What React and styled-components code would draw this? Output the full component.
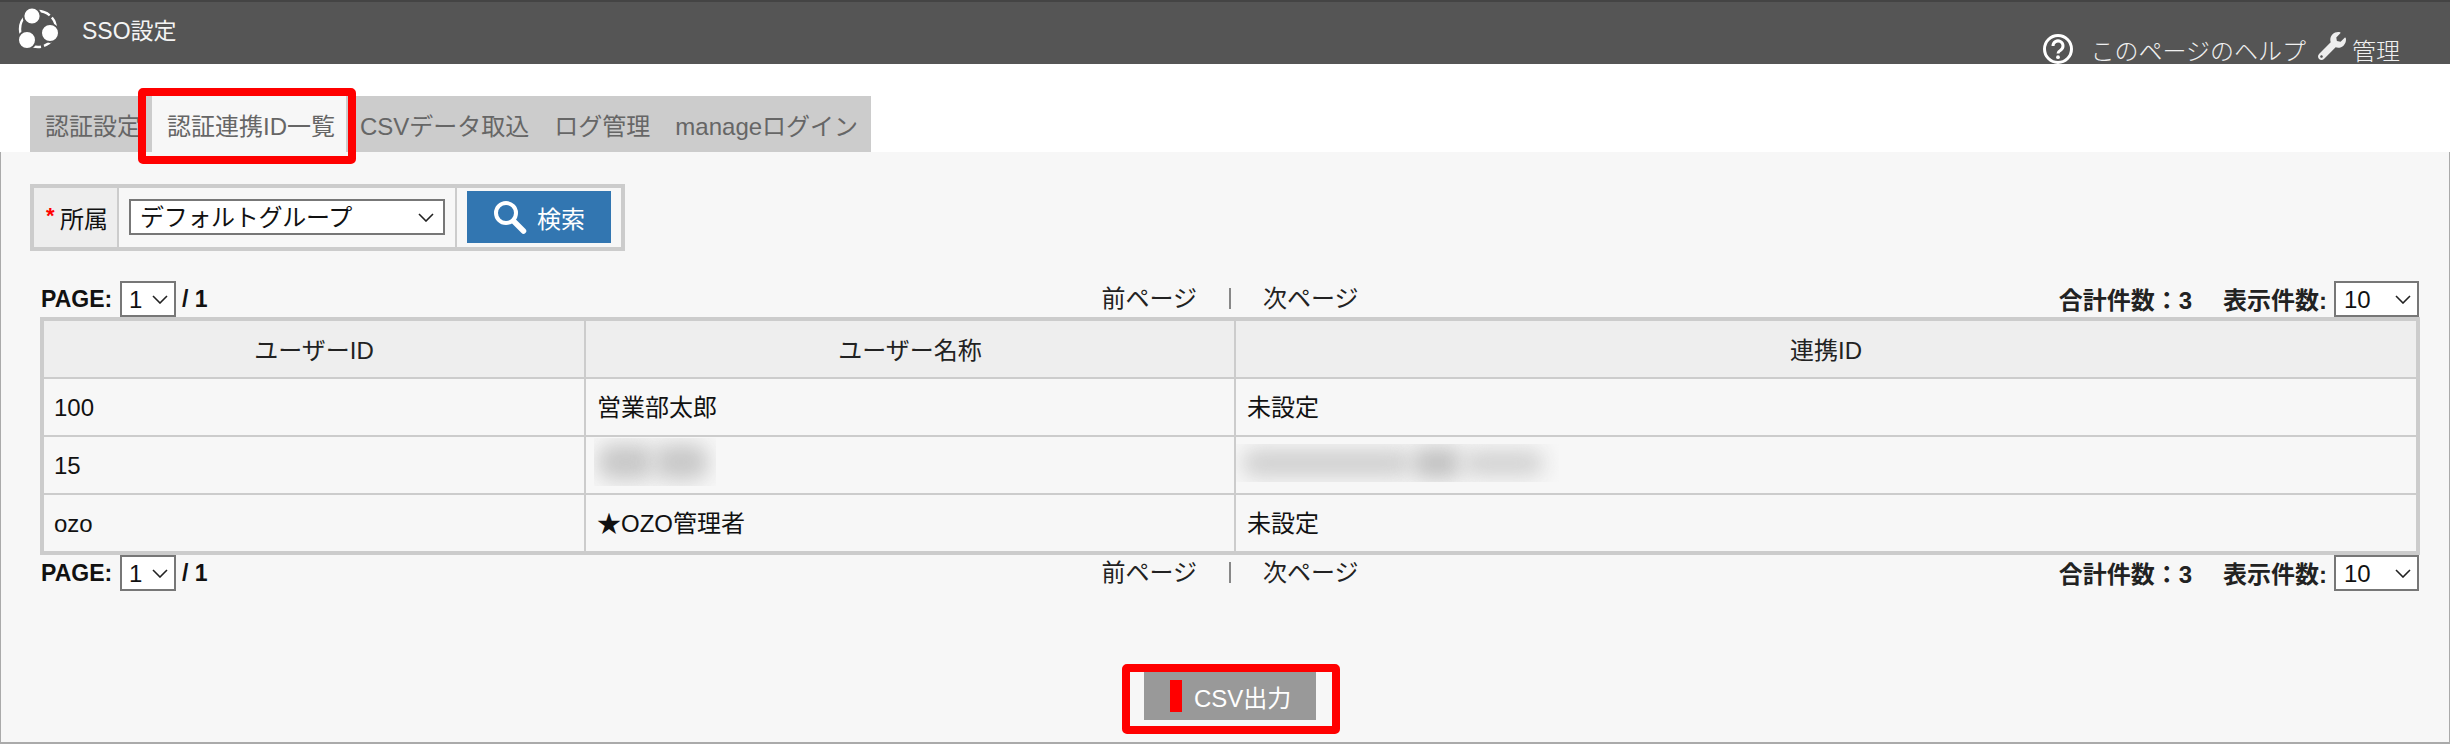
import React from "react";
import styled, { createGlobalStyle } from "styled-components";
import { FaWrench } from "react-icons/fa";

const Global = createGlobalStyle`
  html, body { margin: 0; padding: 0; background: #fff; overflow: hidden; }
  body { font-family: "Liberation Sans", "Noto Sans CJK JP", sans-serif; font-size: 24px; color: #111; }
  * { box-sizing: border-box; }
`;

const Header = styled.header`
  height: 64px;
  background: #555;
  border-top: 2px solid #444;
  display: flex;
  align-items: stretch;
  color: #fff;
  overflow: hidden;
`;
const Brand = styled.div`
  display: flex;
  align-items: center;
  padding-left: 14px;
  gap: 20px;
`;
const LogoSvg = styled.svg`
  width: 48px;
  height: 48px;
  margin-top: -6px;
`;
const Title = styled.h1`
  margin: -8px 0 0;
  font-size: 23px;
  font-weight: 400;
  color: #f4f4f4;
`;
const HeaderLinks = styled.nav`
  margin-left: auto;
  padding-right: 50px;
  display: flex;
  align-items: flex-end;
`;
const HeaderLink = styled.a`
  display: flex;
  align-items: flex-end;
  font-size: 24px;
  line-height: 30px;
  font-weight: 300;
  color: #f0f0f0;
  margin-bottom: -3px;
`;
const HelpIcon = styled.svg`
  width: 32px;
  height: 32px;
  margin: 0 16px 2px 0;
  flex: none;
`;
const WrenchIcon = styled(FaWrench)`
  width: 28px;
  height: 28px;
  margin: 0 6px 7px 12px;
  color: #eee;
  flex: none;
`;

const TabArea = styled.div`
  padding: 32px 0 0 30px;
`;
const TabBar = styled.ul`
  list-style: none;
  margin: 0;
  padding: 0 0 0 1px;
  width: 841px;
  height: 56px;
  background: #ccc;
  display: flex;
`;
const Tab = styled.li`
  position: relative;
  flex: none;
  padding: ${(p) => (p.$active ? "5px 11px 0 15px" : "5px 11px 0 14px")};
  background: ${(p) => (p.$active ? "#f7f7f7" : "transparent")};
  color: #666;
  line-height: 51px;
  white-space: nowrap;
`;
const TabHighlight = styled.span`
  position: absolute;
  top: -8px;
  left: -14px;
  right: -10px;
  bottom: -12px;
  border: 8px solid #f00;
  border-radius: 5px;
  z-index: 2;
`;

const Main = styled.main`
  height: 592px;
  background: #f7f7f7;
  border-left: 1px solid #aaa;
  border-right: 1px solid #aaa;
  border-bottom: 2px solid #aaa;
  padding: 32px 29px 0 39px;
`;
const SearchBox = styled.form`
  display: inline-flex;
  vertical-align: top;
  width: 595px;
  height: 67px;
  margin: 0 0 30px -10px;
  border: 4px solid #ccc;
`;
const SearchLabel = styled.div`
  width: 85px;
  background: #eee;
  border-right: 2px solid #ccc;
  display: flex;
  align-items: center;
  justify-content: flex-start;
  padding-left: 12px;
  white-space: nowrap;
`;
const Required = styled.span`
  color: #f00;
  font-size: 22px;
  font-weight: 700;
  width: 14px;
  margin-top: -3px;
`;
const SearchField = styled.div`
  width: 338px;
  border-right: 2px solid #ccc;
  display: flex;
  align-items: center;
  padding: 0 0 1px 10px;
`;
const SearchAction = styled.div`
  flex: 1;
  display: flex;
  align-items: center;
  padding: 0 10px 1px;
`;
const SearchButton = styled.button`
  width: 144px;
  height: 52px;
  border: 0;
  background: #3276b1;
  color: #fff;
  font: inherit;
  display: flex;
  align-items: center;
  padding: 0 0 0 24px;
  gap: 10px;
`;
const SearchIcon = styled.svg`
  width: 36px;
  height: 36px;
  flex: none;
`;

const SelectWrap = styled.span`
  position: relative;
  display: inline-block;
  flex: none;
  width: ${(p) => p.$w}px;
  height: 36px;
`;
const Select = styled.select`
  appearance: none;
  -webkit-appearance: none;
  width: 100%;
  height: 100%;
  border: 2px solid #777;
  border-radius: 0;
  background: #fff;
  color: #111;
  font-family: inherit;
  font-size: 24px;
  font-weight: 400;
  letter-spacing: ${(p) => p.$spacing || 0}px;
  padding: 0 0 0 ${(p) => p.$pad}px;
  outline: none;
`;
const Chevron = styled.svg`
  position: absolute;
  top: 14px;
  right: ${(p) => p.$r}px;
  width: 16px;
  height: 9px;
  pointer-events: none;
`;

const PagerRow = styled.div`
  height: 36px;
  display: grid;
  grid-template-columns: 1fr auto 1fr;
  align-items: center;
  padding: 0 1px;
`;
const PagerLeft = styled.div`
  display: flex;
  align-items: center;
  font-size: 23px;
  font-weight: 700;
  color: #111;
`;
const PageLabel = styled.span`
  width: 79px;
`;
const PageTotal = styled.span`
  margin-left: 6px;
`;
const PagerCenter = styled.div`
  display: flex;
  align-items: center;
  margin-top: -1px;
`;
const PagerLink = styled.a`
  color: #222;
  line-height: 30px;
`;
const PagerDivider = styled.span`
  width: 2px;
  height: 21px;
  margin: 0 32px;
  background: #888;
`;
const PagerRight = styled.div`
  display: flex;
  justify-content: flex-end;
  align-items: center;
  font-weight: 700;
  color: #222;
`;
const PagerStat = styled.span`
  margin-right: ${(p) => p.$gap}px;
  margin-top: -2px;
  white-space: nowrap;
`;

const Table = styled.table`
  width: 100%;
  table-layout: fixed;
  border-collapse: separate;
  border-spacing: 0;
  border: 4px solid #ccc;
`;
const Th = styled.th`
  height: 58px;
  background: #eee;
  font-weight: 400;
  color: #222;
  border-bottom: 2px solid #ccc;
  border-right: 2px solid #ccc;
  padding: 0 0 2px;
  &:last-child { border-right: 0; }
`;
const Td = styled.td`
  height: 58px;
  padding: ${(p) => (p.$latin ? "2px 11px 0 10px" : "0 11px 3px")};
  color: #111;
  border-bottom: 2px solid #ccc;
  border-right: 2px solid #ccc;
  white-space: nowrap;
  &:last-child { border-right: 0; }
  tr:last-child > & { height: 56px; border-bottom: 0; }
`;
const BlurCell = styled(Td)`
  padding: 0 11px;
`;
const BlurClip = styled.div`
  display: flex;
  align-items: center;
  overflow: hidden;
  width: ${(p) => p.$w}px;
  height: ${(p) => p.$h}px;
  margin: ${(p) => p.$mt}px 0 0 ${(p) => p.$ml}px;
  padding-left: ${(p) => p.$pad}px;
`;
const BlurBlob = styled.span`
  flex: none;
  width: ${(p) => p.$w}px;
  height: ${(p) => p.$h}px;
  background: ${(p) => p.$c};
  border-radius: 14px;
  filter: blur(10px);
`;

const Footer = styled.div`
  display: flex;
  justify-content: center;
  margin-top: 81px;
`;
const CsvButton = styled.button`
  position: relative;
  width: 172px;
  height: 48px;
  border: 0;
  background: #999;
  color: #fff;
  font: inherit;
  display: flex;
  align-items: center;
  padding: 0 0 0 26px;
  gap: 12px;
`;
const CsvMarker = styled.span`
  width: 12px;
  height: 32px;
  background: #f00;
`;
const CsvHighlight = styled.span`
  position: absolute;
  top: -8px;
  left: -22px;
  right: -24px;
  bottom: -14px;
  border: 8px solid #f00;
  border-radius: 5px;
`;

const ChevronDown = ({ r }) => (
  <Chevron $r={r} viewBox="0 0 16 9" aria-hidden="true">
    <path d="M1 1l7 7 7-7" fill="none" stroke="#222" strokeWidth="1.6" />
  </Chevron>
);

const Dropdown = ({ w, pad, r, value, spacing }) => (
  <SelectWrap $w={w}>
    <Select $pad={pad} $spacing={spacing} defaultValue={value}>
      <option>{value}</option>
    </Select>
    <ChevronDown r={r} />
  </SelectWrap>
);

const Pager = () => (
  <PagerRow>
    <PagerLeft>
      <PageLabel>PAGE:</PageLabel>
      <Dropdown w={56} pad={7} r={8} value="1" />
      <PageTotal>/ 1</PageTotal>
    </PagerLeft>
    <PagerCenter>
      <PagerLink>前ページ</PagerLink>
      <PagerDivider />
      <PagerLink>次ページ</PagerLink>
    </PagerCenter>
    <PagerRight>
      <PagerStat $gap={31}>合計件数：3</PagerStat>
      <PagerStat $gap={7}>表示件数:</PagerStat>
      <Dropdown w={85} pad={8} r={8} value="10" />
    </PagerRight>
  </PagerRow>
);

const tabs = ["認証設定", "認証連携ID一覧", "CSVデータ取込", "ログ管理", "manageログイン"];

export default function App() {
  return (
    <>
      <Global />
      <Header>
        <Brand>
          <LogoSvg viewBox="14 4 48 48" aria-hidden="true">
            <circle cx="38" cy="27" r="18" fill="none" stroke="#fff" strokeWidth="2.4" strokeDasharray="22 3" />
            <circle cx="32" cy="14" r="8.6" fill="#fff" stroke="#555" strokeWidth="2" />
            <circle cx="50" cy="31" r="9" fill="#fff" stroke="#555" strokeWidth="2" />
            <circle cx="27" cy="38" r="9" fill="#fff" stroke="#555" strokeWidth="2" />
          </LogoSvg>
          <Title>SSO設定</Title>
        </Brand>
        <HeaderLinks>
          <HeaderLink>
            <HelpIcon viewBox="0 0 32 32" aria-hidden="true">
              <circle cx="16" cy="16" r="13.5" fill="none" stroke="#fff" strokeWidth="3" />
              <path d="M11 13a5 5 0 1 1 7.6 4.2c-1.7 1-2.6 1.7-2.6 3.3" fill="none" stroke="#fff" strokeWidth="3" />
              <circle cx="16" cy="24.2" r="1.9" fill="#fff" />
            </HelpIcon>
            このページのヘルプ
          </HeaderLink>
          <HeaderLink>
            <WrenchIcon />
            管理
          </HeaderLink>
        </HeaderLinks>
      </Header>
      <TabArea>
        <TabBar>
          {tabs.map((t, i) => (
            <Tab key={t} $active={i === 1}>
              {t}
              {i === 1 && <TabHighlight />}
            </Tab>
          ))}
        </TabBar>
      </TabArea>
      <Main>
        <SearchBox onSubmit={(e) => e.preventDefault()}>
          <SearchLabel>
            <Required>*</Required>所属
          </SearchLabel>
          <SearchField>
            <Dropdown w={316} pad={9} r={11} value="デフォルトグループ" spacing={-0.3} />
          </SearchField>
          <SearchAction>
            <SearchButton type="button">
              <SearchIcon viewBox="0 0 36 36" aria-hidden="true">
                <circle cx="15" cy="14" r="10" fill="none" stroke="#fff" strokeWidth="4" />
                <path d="M22.5 22l10 10" stroke="#fff" strokeWidth="5.5" strokeLinecap="round" />
              </SearchIcon>
              検索
            </SearchButton>
          </SearchAction>
        </SearchBox>
        <Pager />
        <Table>
          <colgroup>
            <col style={{ width: 542 }} />
            <col style={{ width: 650 }} />
            <col />
          </colgroup>
          <thead>
            <tr>
              <Th>ユーザーID</Th>
              <Th>ユーザー名称</Th>
              <Th>連携ID</Th>
            </tr>
          </thead>
          <tbody>
            <tr>
              <Td $latin>100</Td>
              <Td>営業部太郎</Td>
              <Td>未設定</Td>
            </tr>
            <tr>
              <Td $latin>15</Td>
              <BlurCell>
                <BlurClip $w={122} $h={48} $mt={-6} $ml={-3} $pad={4}>
                  <BlurBlob $w={56} $h={36} $c="#c8c8c8" />
                  <BlurBlob $w={54} $h={36} $c="#c8c8c8" />
                </BlurClip>
              </BlurCell>
              <BlurCell>
                <BlurClip $w={323} $h={38} $mt={-4} $ml={-11} $pad={6}>
                  <BlurBlob $w={170} $h={28} $c="#d0d0d0" />
                  <BlurBlob $w={50} $h={32} $c="#c2c2c2" />
                  <BlurBlob $w={82} $h={26} $c="#d2d2d2" />
                </BlurClip>
              </BlurCell>
            </tr>
            <tr>
              <Td $latin>ozo</Td>
              <Td>★OZO管理者</Td>
              <Td>未設定</Td>
            </tr>
          </tbody>
        </Table>
        <Pager />
        <Footer>
          <CsvButton type="button">
            <CsvMarker />
            CSV出力
            <CsvHighlight />
          </CsvButton>
        </Footer>
      </Main>
    </>
  );
}
